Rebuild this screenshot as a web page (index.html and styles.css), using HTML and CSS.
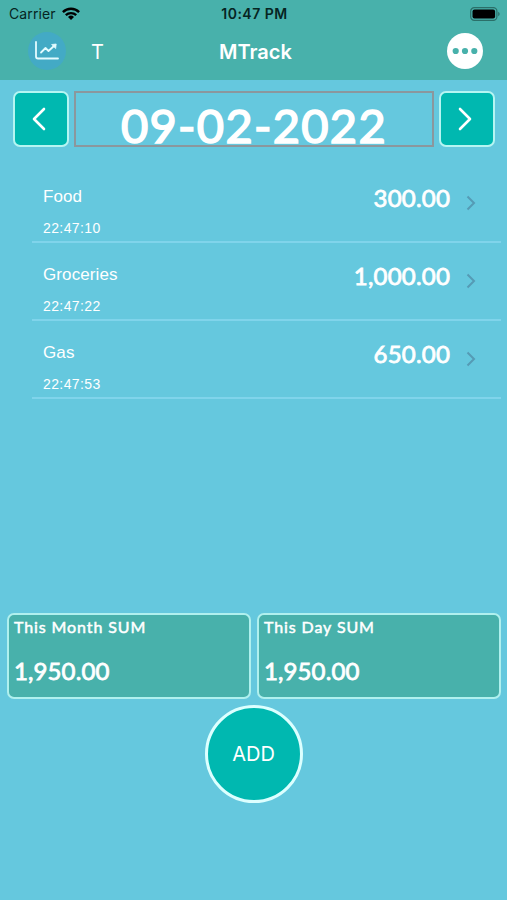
FILE: index.html
```html
<!DOCTYPE html>
<html lang="en">
<head>
    <meta charset="UTF-8">
    <meta name="viewport" content="width=device-width, initial-scale=1.0">
    <title>MTrack</title>
    <link rel="stylesheet" href="styles.css">
</head>
<body>

<header class="header">
    <div class="status-bar">
        <div class="carrier">
            <span>Carrier</span>
            <svg width="18" height="13" viewBox="0 0 18 13">
                <g fill="none" stroke="#000" stroke-width="2.4">
                    <path d="M0.9 5.1a11.6 11.6 0 0 1 16.2 0"/>
                    <path d="M3.8 8.2a7.5 7.5 0 0 1 10.4 0"/>
                </g>
                <path d="M9 13L6 10a4.3 4.3 0 0 1 6 0z"/>
            </svg>
        </div>
        <span class="clock">10:47 PM</span>
        <svg class="battery" width="30" height="14" viewBox="0 0 30 14">
            <rect x="0.7" y="0.7" width="26.2" height="12.6" rx="3.6" fill="none" stroke="#2b6f69" stroke-width="1.2"/>
            <rect x="2.5" y="2.5" width="22.6" height="9" rx="2"/>
            <path d="M28.2 4.7q1.5 0.7 1.5 2.3t-1.5 2.3z" fill="#2b6f69"/>
        </svg>
    </div>
    <nav class="nav-bar">
        <button class="chart-btn" aria-label="Chart">
            <svg width="24" height="20" viewBox="0 0 24 20" fill="none" stroke="#e4fbff" stroke-width="1.8" stroke-linecap="round" stroke-linejoin="round">
                <path d="M1 1v14.5q0 2 2 2h20"/>
                <path d="M6 11.500l4.500-4.500 3 3 6-5.500"/>
                <path d="M17 3.500l4.200-0.500-0.500 4.200z" fill="#e4fbff" stroke-width="0.8"/>
            </svg>
        </button>
        <button class="text-btn">T</button>
        <h1 class="title">MTrack</h1>
        <button class="more-btn" aria-label="More">
            <svg width="36" height="36" viewBox="0 0 36 36" fill="#48b1ab">
                <circle cx="8.700" cy="18" r="3.100"/>
                <circle cx="18" cy="18" r="3.100"/>
                <circle cx="27.300" cy="18" r="3.100"/>
            </svg>
        </button>
    </nav>
</header>

<main class="main">
    <div class="date-row">
        <button class="arrow-btn" aria-label="Previous day">
            <svg width="14" height="24" viewBox="0 0 14 24"><path d="M12 2L2 12l10 10"/></svg>
        </button>
        <div class="date">09-02-2022</div>
        <button class="arrow-btn" aria-label="Next day">
            <svg width="14" height="24" viewBox="0 0 14 24"><path d="M2 2l10 10L2 22"/></svg>
        </button>
    </div>

    <ul class="list">
        <li class="item">
            <div class="info">
                <span class="name">Food</span>
                <span class="time">22:47:10</span>
            </div>
            <span class="amount">300.00</span>
            <svg class="chevron" width="10" height="16" viewBox="0 0 10 16"><path d="M1.500 1.500L8 8l-6.500 6.500"/></svg>
        </li>
        <li class="item">
            <div class="info">
                <span class="name">Groceries</span>
                <span class="time">22:47:22</span>
            </div>
            <span class="amount">1,000.00</span>
            <svg class="chevron" width="10" height="16" viewBox="0 0 10 16"><path d="M1.500 1.500L8 8l-6.500 6.500"/></svg>
        </li>
        <li class="item">
            <div class="info">
                <span class="name">Gas</span>
                <span class="time">22:47:53</span>
            </div>
            <span class="amount">650.00</span>
            <svg class="chevron" width="10" height="16" viewBox="0 0 10 16"><path d="M1.500 1.500L8 8l-6.500 6.500"/></svg>
        </li>
    </ul>

    <div class="sums">
        <div class="sum">
            <div class="sum-label">This Month SUM</div>
            <div class="sum-value">1,950.00</div>
        </div>
        <div class="sum">
            <div class="sum-label">This Day SUM</div>
            <div class="sum-value">1,950.00</div>
        </div>
    </div>

    <button class="add-btn">ADD</button>
</main>

</body>
</html>
```

FILE: styles.css
```css
* {
    box-sizing: border-box;
}
body {
    margin: 0;
    height: 900px;
    display: flex;
    flex-direction: column;
    background-color: #65c8de;
    color: white;
    font-family: "Liberation Sans", Arial, sans-serif;
}
button {
    padding: 0;
    border: none;
    background: none;
    color: inherit;
    cursor: pointer;
}
svg {
    display: block;
}
.header {
    height: 80px;
    background-color: #48b1ab;
}
.status-bar {
    height: 27px;
    padding: 0 7px 0 9px;
    display: grid;
    grid-template-columns: 1fr auto 1fr;
    align-items: center;
    color: #062522;
    font-family: Inter, sans-serif;
    font-size: 14px;
}
.carrier {
    display: flex;
    align-items: center;
    gap: 6px;
    letter-spacing: 0.1px;
}
.clock {
    font-weight: 600;
    letter-spacing: 0.5px;
}
.battery {
    justify-self: end;
}
.nav-bar {
    height: 48px;
    padding: 0 24px 0 28px;
    display: grid;
    grid-template-columns: 38px 63px 1fr 101px;
    align-items: center;
    font-family: Inter, sans-serif;
}
.chart-btn {
    width: 38px;
    height: 38px;
    border-radius: 50%;
    background-color: #43aac5;
    display: flex;
    align-items: center;
    justify-content: center;
}
.text-btn {
    font-family: Inter, sans-serif;
    font-size: 20px;
    padding-top: 2px;
}
.title {
    margin: 0;
    padding-top: 2px;
    text-align: center;
    font-size: 20px;
    font-weight: 600;
}
.more-btn {
    width: 36px;
    height: 36px;
    border-radius: 50%;
    background-color: white;
    justify-self: end;
}
.main {
    flex: 1;
    display: flex;
    flex-direction: column;
}
.date-row {
    display: flex;
    gap: 5px;
    padding: 11px 12px 0 13px;
}
.arrow-btn {
    width: 56px;
    height: 56px;
    border: 2px solid #b5f5f2;
    border-radius: 7px;
    background-color: #00b8b0;
    display: flex;
    align-items: center;
    justify-content: center;
    padding-right: 5px;
}
.arrow-btn path {
    fill: none;
    stroke: white;
    stroke-width: 2.6;
    stroke-linecap: round;
    stroke-linejoin: round;
}
.date {
    flex: 1;
    height: 56px;
    border: 2px solid #8b979d;
    padding-top: 4px;
    text-align: center;
    line-height: 56px;
    font-family: "Chalkboard SE", Lato, sans-serif;
    font-size: 47px;
    letter-spacing: 1.3px;
    -webkit-text-stroke: 1.6px white;
}
.list {
    list-style: none;
    margin: 18px 6px 0 32px;
    padding: 0;
    flex: 1;
}
.item {
    height: 78px;
    padding: 20px 25px 0 11px;
    border-bottom: 2px solid #80d4eb;
    display: flex;
    align-items: flex-start;
}
.info {
    flex: 1;
    padding-top: 2px;
    display: flex;
    flex-direction: column;
    gap: 12px;
}
.name {
    font-size: 17px;
    line-height: 20px;
    letter-spacing: 0.1px;
}
.time {
    font-size: 14px;
    line-height: 18px;
    letter-spacing: 0.4px;
}
.amount {
    font-family: "Chalkboard SE", Lato, sans-serif;
    font-size: 24px;
    line-height: 26px;
    margin-right: 16px;
    letter-spacing: 0.2px;
    -webkit-text-stroke: 0.8px white;
}
.chevron {
    margin-top: 10px;
}
.chevron path {
    fill: none;
    stroke: #559bb5;
    stroke-width: 2;
}
.sums {
    display: flex;
    gap: 6px;
    padding: 0 6px 0 7px;
}
.sum {
    flex: 1;
    height: 86px;
    border: 2px solid #b0f0ee;
    border-radius: 7px;
    background-color: #48b1ab;
    padding: 2px 5px;
    font-family: "Chalkboard SE", Lato, sans-serif;
}
.sum-label {
    font-size: 16px;
    line-height: 20px;
    letter-spacing: 0.9px;
    -webkit-text-stroke: 0.5px white;
}
.sum-value {
    margin-top: 20px;
    font-size: 24px;
    line-height: 28px;
    letter-spacing: 0.1px;
    -webkit-text-stroke: 0.8px white;
}
.add-btn {
    width: 98px;
    height: 98px;
    margin: 6px auto 97px;
    border: 3px solid #dcffff;
    border-radius: 50%;
    background-color: #00b8b0;
    font-family: Inter, sans-serif;
    font-size: 20px;
}
```
